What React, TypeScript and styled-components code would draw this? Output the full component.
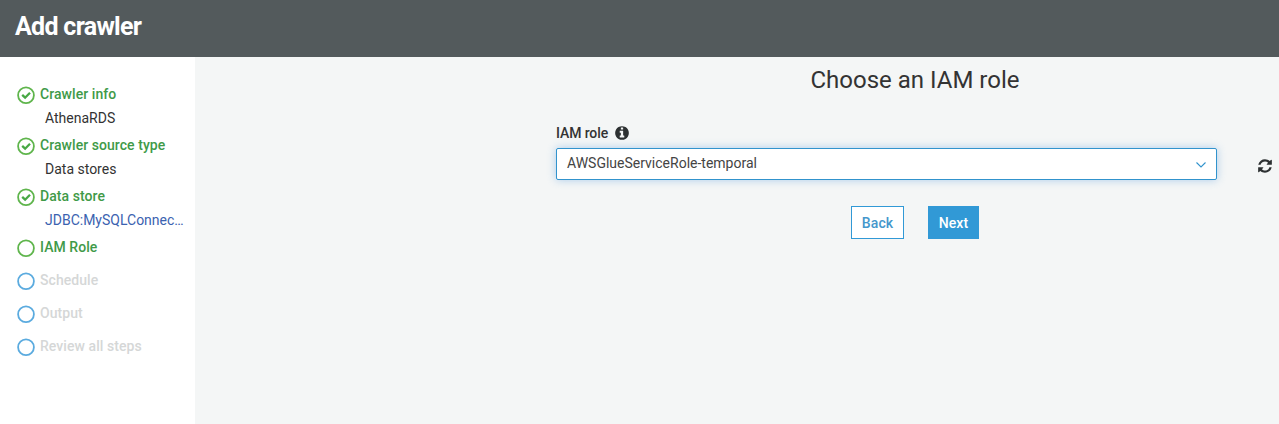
import React from 'react';
import styled, { createGlobalStyle } from 'styled-components';

const GlobalStyle = createGlobalStyle`
  * { box-sizing: border-box; }
  body {
    margin: 0;
    font-family: Roboto, "Liberation Sans", sans-serif;
    font-size: 14px;
    color: #333;
    background: #f4f6f6;
    overflow: hidden;
  }
`;

const Page = styled.div`
  display: flex;
  flex-direction: column;
  height: 424px;
`;

const Header = styled.header`
  height: 57px;
  flex: none;
  padding: 11px 15px 0;
  background: #535a5c;
`;

const HeaderTitle = styled.h1`
  margin: 0;
  font-size: 25px;
  line-height: 32px;
  font-weight: 700;
  letter-spacing: -0.7px;
  color: #fff;
`;

const Body = styled.div`
  display: flex;
  flex: 1;
  min-height: 0;
`;

const Sidebar = styled.nav`
  width: 195px;
  flex: none;
  padding: 25px 10px 0 17px;
  background: #fff;
`;

const Step = styled.div<{ $gap?: number }>`
  margin-bottom: ${(p) => p.$gap ?? 0}px;
`;

const StepHead = styled.div`
  display: flex;
  gap: 5px;
  height: 24px;
`;

const StepIcon = styled.svg`
  width: 18px;
  height: 18px;
  margin-top: 4px;
  flex: none;
  fill: none;
`;

const StepName = styled.span<{ $pending?: boolean }>`
  line-height: 24px;
  font-weight: 500;
  letter-spacing: 0.06px;
  color: ${(p) => (p.$pending ? '#d5d7d7' : '#3f9a48')};
`;

const StepDetail = styled.div<{ $link?: boolean }>`
  height: 27px;
  margin-left: 28px;
  line-height: 24px;
  white-space: nowrap;
  color: ${(p) => (p.$link ? '#3b62b0' : '#333')};
`;

const Main = styled.main`
  flex: 1;
  min-width: 0;
  padding: 7px 7px 0 361px;
`;

const Heading = styled.h2`
  width: 718px;
  margin: 0;
  line-height: 32px;
  font-size: 24px;
  font-weight: 400;
  text-align: center;
`;

const Label = styled.label`
  display: flex;
  align-items: center;
  gap: 6px;
  height: 20px;
  margin-top: 27px;
  font-weight: 500;
  letter-spacing: -0.1px;
`;

const FieldRow = styled.div`
  display: flex;
  align-items: center;
  gap: 41px;
  margin-top: 5px;
`;

const Select = styled.div`
  display: flex;
  justify-content: space-between;
  width: 661px;
  height: 32px;
  padding: 0 9px 0 10px;
  border: 1px solid #3193cd;
  border-radius: 2px;
  background: #fff;
  box-shadow: 0 0 8px rgba(80, 150, 220, 0.45);
  line-height: 28px;
  color: #444;
`;

const Chevron = styled.svg`
  width: 12px;
  height: 8px;
  margin-top: 12px;
  fill: none;
  stroke: #3193cd;
  stroke-width: 1.1;
`;

const Glyph = styled.svg<{ $w: number; $h: number; $top?: number }>`
  width: ${(p) => p.$w}px;
  height: ${(p) => p.$h}px;
  margin-top: ${(p) => p.$top ?? 0}px;
  flex: none;
  fill: #2d3132;
`;

const Actions = styled.div`
  display: flex;
  gap: 24px;
  margin: 26px 0 0 295px;
`;

const Button = styled.button<{ $primary?: boolean }>`
  width: ${(p) => (p.$primary ? 51 : 53)}px;
  height: 33px;
  padding: 0;
  border: 1px solid #3199d6;
  background: ${(p) => (p.$primary ? '#3199d6' : '#fff')};
  color: ${(p) => (p.$primary ? '#fff' : '#4597cc')};
  font: 500 14px Roboto, "Liberation Sans", sans-serif;
  letter-spacing: 0.1px;
`;

type Status = 'done' | 'current' | 'pending';

const steps: { name: string; status: Status; detail?: string; link?: boolean; gap?: number }[] = [
  { name: 'Crawler info', status: 'done', detail: 'AthenaRDS' },
  { name: 'Crawler source type', status: 'done', detail: 'Data stores' },
  { name: 'Data store', status: 'done', detail: 'JDBC:MySQLConnec…', link: true },
  { name: 'IAM Role', status: 'current', gap: 9 },
  { name: 'Schedule', status: 'pending', gap: 9 },
  { name: 'Output', status: 'pending', gap: 9 },
  { name: 'Review all steps', status: 'pending' },
];

const StatusIcon = ({ status }: { status: Status }) => (
  <StepIcon viewBox="0 0 18 18">
    <circle cx="9" cy="9.2" r="7.9" stroke={status === 'pending' ? '#5babdf' : '#5fb54c'} strokeWidth="1.8" />
    {status === 'done' && <path d="M5.2 8.9 L8.1 11.7 L13 6.7" stroke="#48a845" strokeWidth="2.3" />}
  </StepIcon>
);

export default function App() {
  return (
    <>
      <GlobalStyle />
      <Page>
        <Header>
          <HeaderTitle>Add crawler</HeaderTitle>
        </Header>
        <Body>
          <Sidebar>
            {steps.map((s) => (
              <Step key={s.name} $gap={s.gap}>
                <StepHead>
                  <StatusIcon status={s.status} />
                  <StepName $pending={s.status === 'pending'}>{s.name}</StepName>
                </StepHead>
                {s.detail && <StepDetail $link={s.link}>{s.detail}</StepDetail>}
              </Step>
            ))}
          </Sidebar>
          <Main>
            <Heading>Choose an IAM role</Heading>
            <Label>
              IAM role
              <Glyph $w={16} $h={16} viewBox="0 0 1792 1792">
                <path d="M1152 1376v-160q0-14-9-23t-23-9h-96v-512q0-14-9-23t-23-9h-320q-14 0-23 9t-9 23v160q0 14 9 23t23 9h96v320h-96q-14 0-23 9t-9 23v160q0 14 9 23t23 9h448q14 0 23-9t9-23zm-128-896v-160q0-14-9-23t-23-9h-192q-14 0-23 9t-9 23v160q0 14 9 23t23 9h192q14 0 23-9t9-23zm640 416q0 209-103 385.5t-279.5 279.5-385.5 103-385.5-103-279.5-279.5-103-385.5 103-385.5 279.5-279.5 385.5-103 385.5 103 279.5 279.5 103 385.5z" />
              </Glyph>
            </Label>
            <FieldRow>
              <Select>
                AWSGlueServiceRole-temporal
                <Chevron viewBox="0 0 12 8">
                  <path d="M1.5 1.5 L6 6 L10.500 1.500" />
                </Chevron>
              </Select>
              <Glyph $w={14} $h={16} $top={4} viewBox="0 0 1536 1792">
                <path d="M1511 1056q0 5-1 7-64 268-268 434.500t-478 166.500q-146 0-282.500-55t-243.500-157l-129 129q-19 19-45 19t-45-19-19-45v-448q0-26 19-45t45-19h448q26 0 45 19t19 45-19 45l-137 137q71 66 161 102t187 36q134 0 250-65t186-179q11-17 53-117 8-23 30-23h192q13 0 22.500 9.500t9.500 22.500zm25-800v448q0 26-19 45t-45 19h-448q-26 0-45-19t-19-45 19-45l138-138q-148-137-349-137-134 0-250 65t-186 179q-11 17-53 117-8 23-30 23h-199q-13 0-22.500-9.500t-9.500-22.500v-7q65-268 270-434.500t480-166.500q146 0 284 55.500t245 156.500l130-129q19-19 45-19t45 19 19 45z" />
              </Glyph>
            </FieldRow>
            <Actions>
              <Button>Back</Button>
              <Button $primary>Next</Button>
            </Actions>
          </Main>
        </Body>
      </Page>
    </>
  );
}
